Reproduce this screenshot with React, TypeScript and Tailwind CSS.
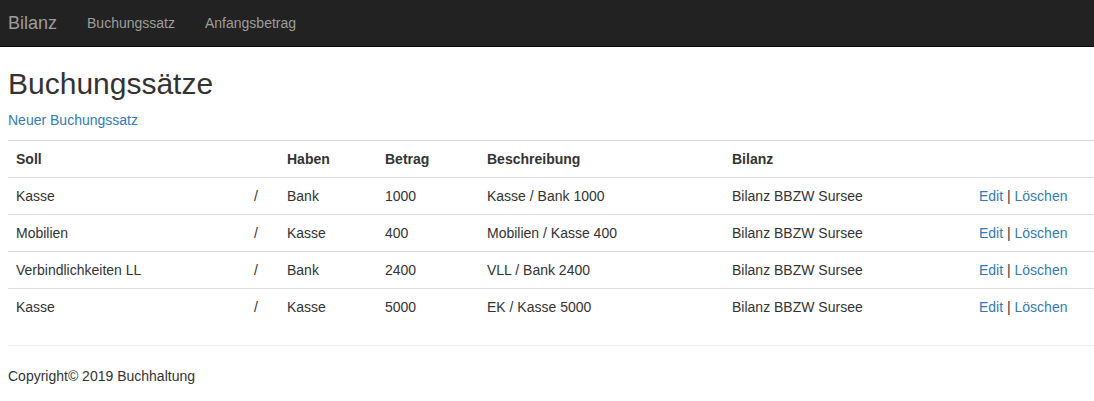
const buchungen = [
  { soll: "Kasse", haben: "Bank", betrag: 1000, beschreibung: "Kasse / Bank 1000", bilanz: "Bilanz BBZW Sursee" },
  { soll: "Mobilien", haben: "Kasse", betrag: 400, beschreibung: "Mobilien / Kasse 400", bilanz: "Bilanz BBZW Sursee" },
  { soll: "Verbindlichkeiten LL", haben: "Bank", betrag: 2400, beschreibung: "VLL / Bank 2400", bilanz: "Bilanz BBZW Sursee" },
  { soll: "Kasse", haben: "Kasse", betrag: 5000, beschreibung: "EK / Kasse 5000", bilanz: "Bilanz BBZW Sursee" },
];

export default function App() {
  return (
    <div className="min-h-screen bg-white font-['Liberation_Sans',Arial,sans-serif] text-[14px] leading-5 text-[#333]">
      {/* Navbar */}
      <nav className="h-[47px] bg-[#222] border-b border-[#080808] flex items-center pl-2">
        <a href="#" className="text-[18px] text-[#9d9d9d] pr-[15px]">Bilanz</a>
        <a href="#" className="text-[#9d9d9d] px-[15px]">Buchungssatz</a>
        <a href="#" className="text-[#9d9d9d] px-[15px]">Anfangsbetrag</a>
      </nav>

      <div className="pl-2">
        <h2 className="mt-5 mb-2.5 text-[30px] leading-[33px] font-normal">Buchungssätze</h2>
        <p className="mb-2.5">
          <a href="#" className="text-[#337ab7]">Neuer Buchungssatz</a>
        </p>

        <table className="table-fixed w-[1086px] border-collapse">
          <thead>
            <tr className="border-t border-[#ddd]">
              <th className="w-[238px] text-left font-bold px-2 py-2">Soll</th>
              <th className="w-[33px] px-2 py-2"></th>
              <th className="w-[98px] text-left font-bold px-2 py-2">Haben</th>
              <th className="w-[102px] text-left font-bold px-2 py-2">Betrag</th>
              <th className="w-[245px] text-left font-bold px-2 py-2">Beschreibung</th>
              <th className="w-[247px] text-left font-bold px-2 py-2">Bilanz</th>
              <th className="px-2 py-2"></th>
            </tr>
          </thead>
          <tbody>
            {buchungen.map((b, i) => (
              <tr key={i} className="border-t border-[#ddd]">
                <td className="px-2 py-2">{b.soll}</td>
                <td className="px-2 py-2">/</td>
                <td className="px-2 py-2">{b.haben}</td>
                <td className="px-2 py-2">{b.betrag}</td>
                <td className="px-2 py-2">{b.beschreibung}</td>
                <td className="px-2 py-2">{b.bilanz}</td>
                <td className="px-2 py-2 whitespace-nowrap">
                  <a href="#" className="text-[#337ab7]">Edit</a> |{" "}
                  <a href="#" className="text-[#337ab7]">Löschen</a>
                </td>
              </tr>
            ))}
          </tbody>
        </table>

        <hr className="mt-5 mb-5 border-t border-[#eee]" />
        <footer>
          <p>Copyright© 2019 Buchhaltung</p>
        </footer>
      </div>
    </div>
  );
}
